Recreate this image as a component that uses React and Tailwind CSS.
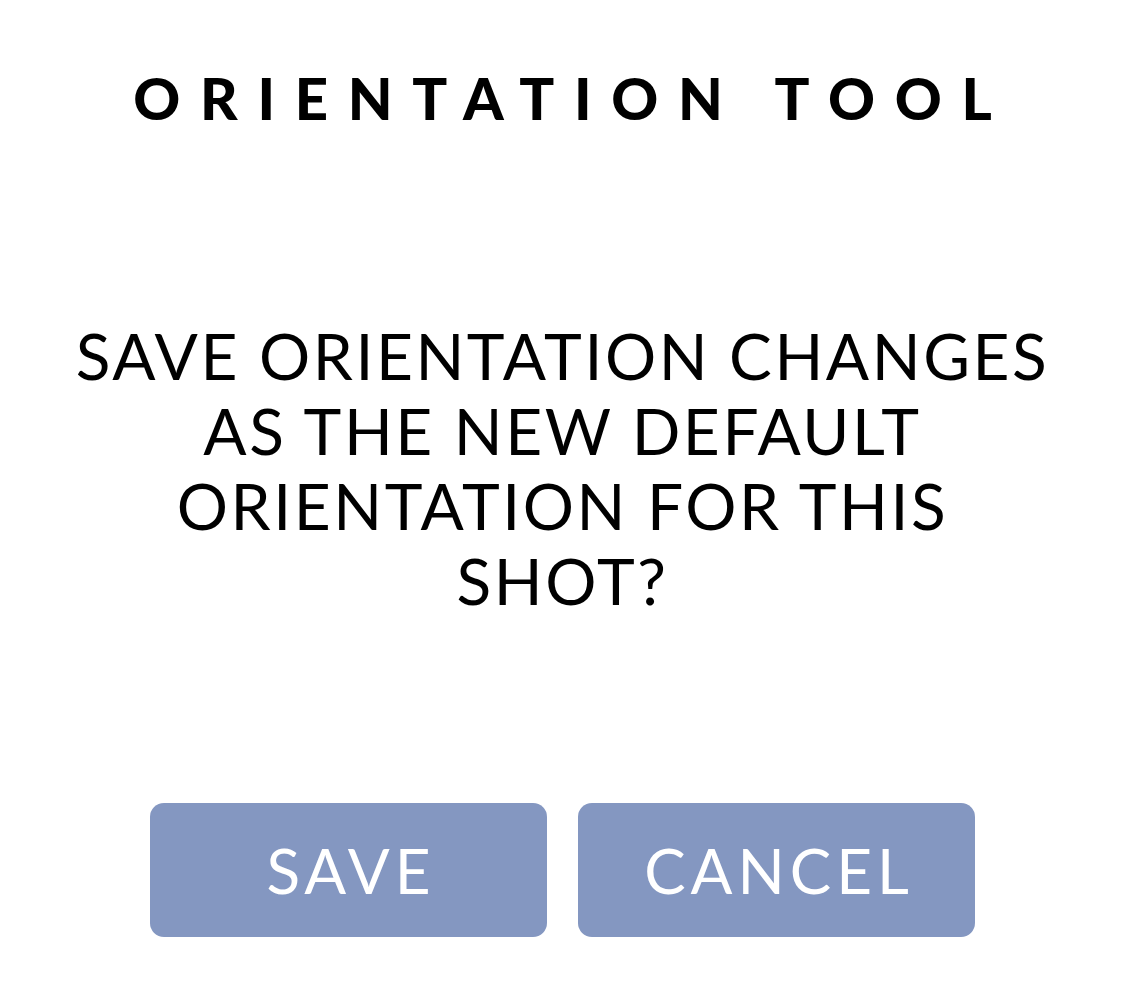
export default function App() {
  const font = { fontFamily: 'Lato, "Noto Sans", sans-serif' };
  return (
    <div className="w-[1125px] h-[1000px] bg-white flex flex-col items-center" style={font}>
      <h1 className="mt-[66px] text-[58px] leading-[64px] font-black tracking-[0.34em] text-black pl-[0.34em]">
        ORIENTATION TOOL
      </h1>
      <p className="mt-[188px] text-[64px] leading-[75px] font-normal tracking-[0.04em] text-black text-center w-[1100px]">
        SAVE ORIENTATION CHANGES<br />AS THE NEW DEFAULT<br />ORIENTATION FOR THIS<br />SHOT?
      </p>
      <div className="mt-[185px] flex gap-[31px]">
        <button className="w-[397px] h-[134px] rounded-[14px] bg-[#8497c1] text-white text-[62px] font-normal tracking-[0.08em] pl-[0.08em]">
          SAVE
        </button>
        <button className="w-[397px] h-[134px] rounded-[14px] bg-[#8497c1] text-white text-[62px] font-normal tracking-[0.08em] pl-[0.08em]">
          CANCEL
        </button>
      </div>
    </div>
  );
}
